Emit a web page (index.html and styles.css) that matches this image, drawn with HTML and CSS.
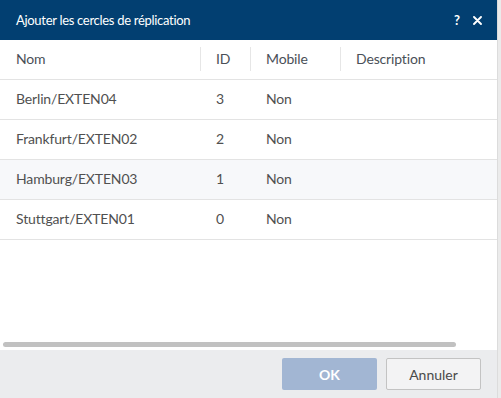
FILE: index.html
```html
<!DOCTYPE html>
<html>
<head>
    <meta charset="utf-8">
    <title>Ajouter les cercles de réplication</title>
    <link rel="stylesheet" href="styles.css">
</head>
<body>
    <div class="dialog">
        <div class="dialog-main">
            <div class="title-bar">
                <span class="title">Ajouter les cercles de réplication</span>
                <span class="title-actions">
                    <span class="help">?</span>
                    <svg class="close" width="9" height="9" viewBox="0 0 9 9">
                        <path d="M1 1 L8 8 M8 1 L1 8" stroke="#fff" stroke-width="1.9" stroke-linecap="round"/>
                    </svg>
                </span>
            </div>
            <div class="table-area">
                <div class="row head">
                    <div class="cell col-name">Nom</div>
                    <div class="cell col-id">ID</div>
                    <div class="cell col-mobile">Mobile</div>
                    <div class="cell col-desc">Description</div>
                </div>
                <div class="row">
                    <div class="cell col-name">Berlin/EXTEN04</div>
                    <div class="cell col-id">3</div>
                    <div class="cell col-mobile">Non</div>
                    <div class="cell col-desc"></div>
                </div>
                <div class="row">
                    <div class="cell col-name">Frankfurt/EXTEN02</div>
                    <div class="cell col-id">2</div>
                    <div class="cell col-mobile">Non</div>
                    <div class="cell col-desc"></div>
                </div>
                <div class="row hover">
                    <div class="cell col-name">Hamburg/EXTEN03</div>
                    <div class="cell col-id">1</div>
                    <div class="cell col-mobile">Non</div>
                    <div class="cell col-desc"></div>
                </div>
                <div class="row">
                    <div class="cell col-name">Stuttgart/EXTEN01</div>
                    <div class="cell col-id">0</div>
                    <div class="cell col-mobile">Non</div>
                    <div class="cell col-desc"></div>
                </div>
                <div class="spacer"></div>
                <div class="h-scroll"><div class="h-thumb"></div></div>
            </div>
            <div class="footer">
                <button class="btn btn-ok" disabled>OK</button>
                <button class="btn btn-cancel">Annuler</button>
            </div>
        </div>
        <div class="v-strip"></div>
    </div>
</body>
</html>
```

FILE: styles.css
```css
html, body {
    margin: 0;
    height: 100%;
}
body {
    font-family: Lato, "Liberation Sans", sans-serif;
    color: #505050;
    background: #fff;
}
.dialog {
    display: flex;
    height: 398px;
}
.dialog-main {
    flex: 1;
    display: flex;
    flex-direction: column;
}
.v-strip {
    width: 3px;
    background: #ebebeb;
    border-left: 1px solid #dcdcdc;
}
.title-bar {
    height: 40px;
    background: #023f71;
    color: #fff;
    display: flex;
    align-items: center;
    justify-content: space-between;
    padding: 0 15px 0 16px;
}
.title {
    font-size: 13px;
    letter-spacing: -0.3px;
}
.title-actions {
    display: flex;
    align-items: center;
    gap: 13px;
}
.help {
    font-size: 13px;
    font-weight: bold;
}
.table-area {
    flex: 1;
    display: flex;
    flex-direction: column;
}
.row {
    display: flex;
    height: 37px;
    padding-bottom: 2px;
    border-bottom: 1px solid #e3e3e3;
    font-size: 14px;
    letter-spacing: -0.15px;
    align-items: center;
}
.row.head {
    color: #4a4f57;
}
.row.hover {
    background: #f7f8fa;
}
.cell {
    box-sizing: border-box;
    padding-left: 16px;
}
.col-name { width: 200px; }
.col-id { width: 50px; }
.col-mobile { width: 90px; }
.col-desc { flex: 1; }
.head .col-id,
.head .col-mobile,
.head .col-desc {
    border-left: 1px solid #e6e6e6;
    height: 24px;
    line-height: 24px;
    padding-left: 15px;
}
.spacer {
    flex: 1;
}
.h-scroll {
    height: 10px;
    padding: 0 41px 0 3px;
}
.h-thumb {
    height: 5px;
    margin-top: 2px;
    border-radius: 3px;
    background: #c1c1c1;
}
.footer {
    height: 48px;
    background: #ebecee;
    display: flex;
    justify-content: flex-end;
    align-items: center;
    gap: 9px;
    padding-right: 16px;
}
.btn {
    width: 95px;
    height: 32px;
    font-family: Lato, "Liberation Sans", sans-serif;
    font-size: 14px;
    border-radius: 2px;
}
.btn-ok {
    background: #a2b6d3;
    border: none;
    color: #fff;
    font-weight: bold;
}
.btn-cancel {
    background: #f3f3f4;
    border: 1px solid #c3c3c3;
    color: #4a4a4a;
}
```
